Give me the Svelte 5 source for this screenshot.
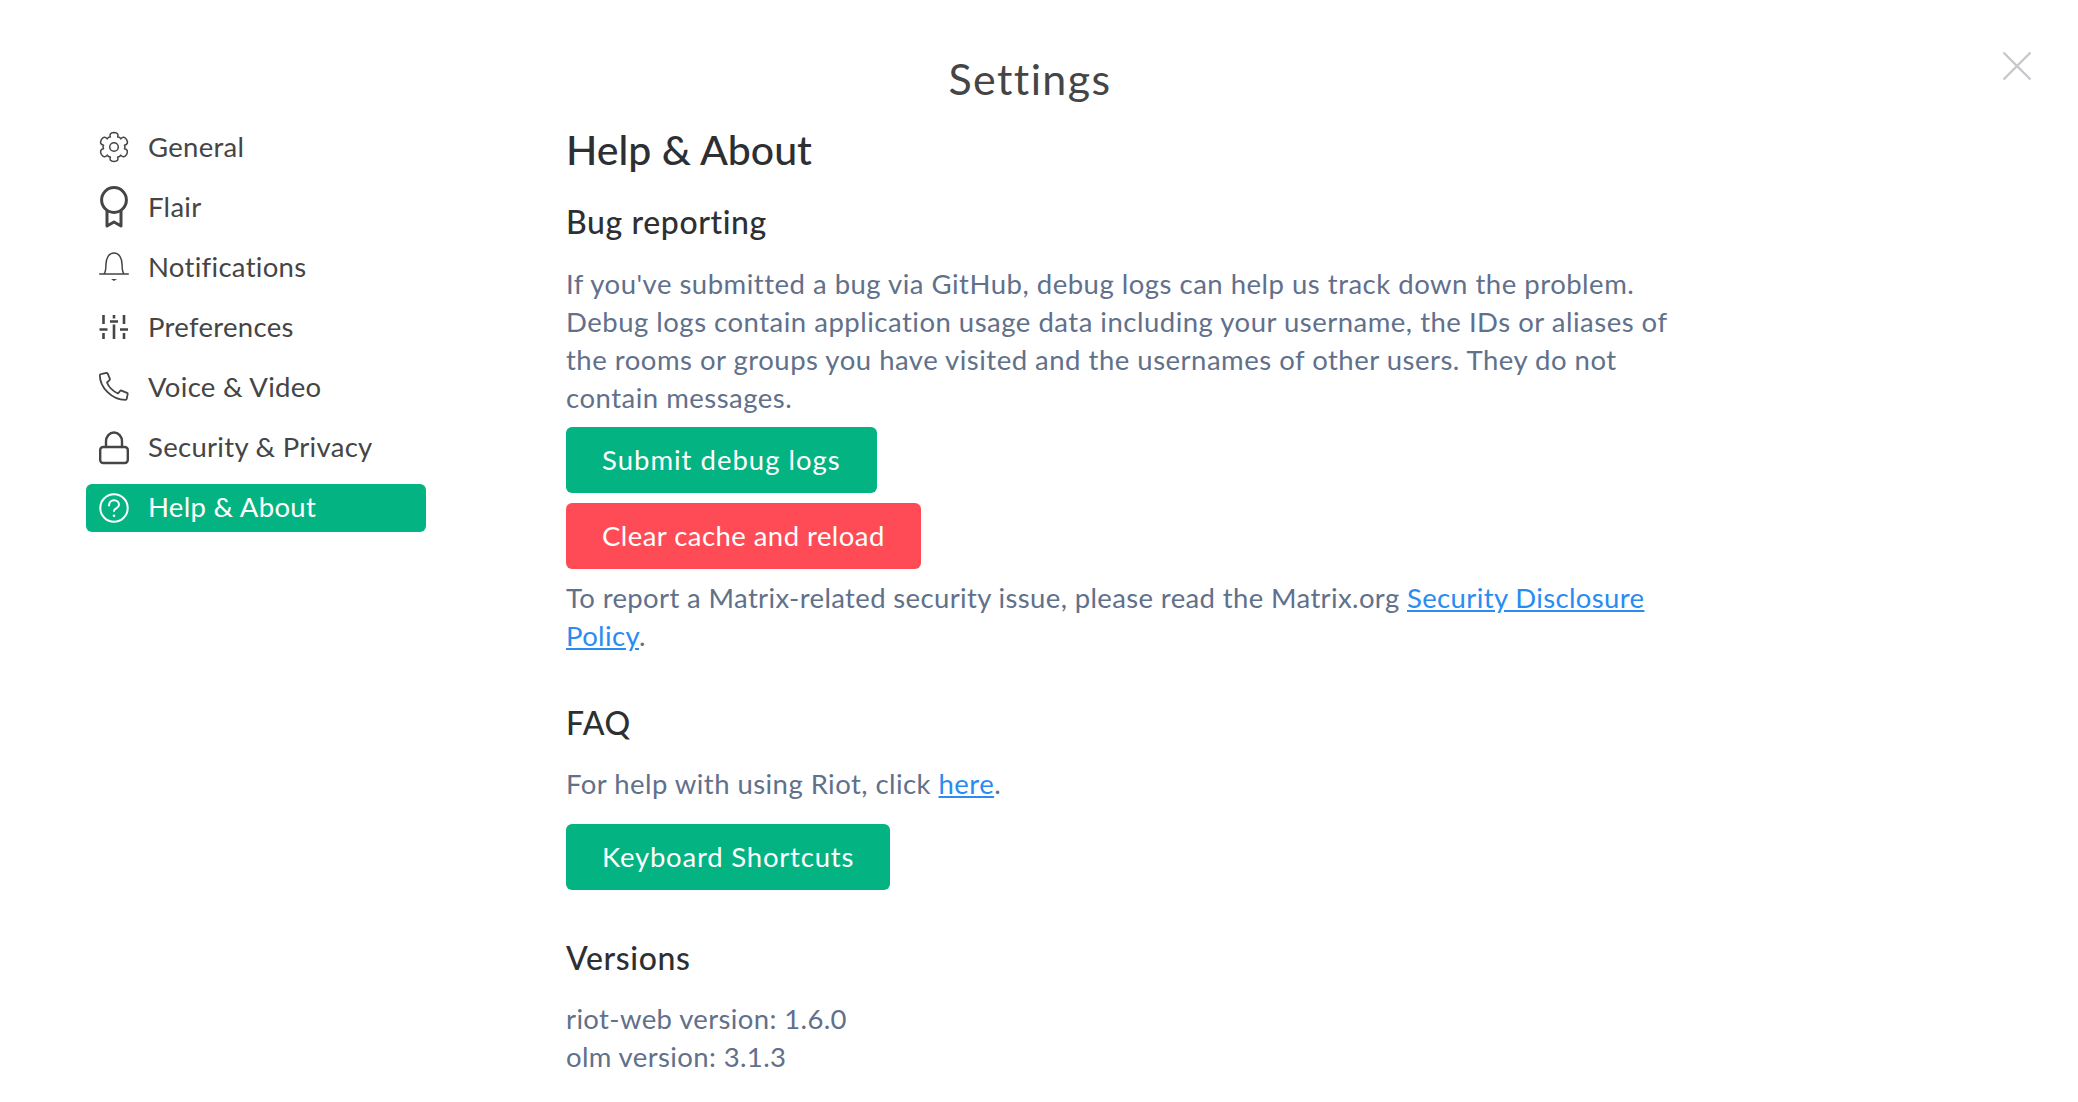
<script>
  const items = ['General','Flair','Notifications','Preferences','Voice & Video','Security & Privacy','Help & About'];
  const pt = (r, deg) => {
    const a = (deg * Math.PI) / 180;
    return `${(15 + r * Math.cos(a)).toFixed(2)} ${(15 + r * Math.sin(a)).toFixed(2)}`;
  };
  let gear = '';
  for (let k = 0; k < 6; k++) {
    const a = k * 60 - 90;
    gear += `${k ? 'Q' + pt(11.6, a - 30) + ' ' : 'M'}${pt(10.6, a - 20)}Q${pt(15.2, a - 20)} ${pt(14.6, a)}Q${pt(15.2, a + 20)} ${pt(10.6, a + 20)}`;
  }
  gear += `Q${pt(11.6, -120)} ${pt(10.6, -110)}Z`;
</script>

<div class="page">
  <header class="top">
    <div class="title">Settings</div>
    <button class="close" aria-label="Close">
      <svg viewBox="0 0 30 30" width="30" height="30"><path d="M1.5 1.5 28.5 28.5M28.5 1.5 1.5 28.5" stroke="#c5c8cc" stroke-width="2.4" fill="none"/></svg>
    </button>
  </header>
  <div class="body">
    <nav class="side">
      {#each items as item, i}
        <div class="item" class:active={i === 6}>
          <svg class="ic" viewBox="0 0 30 30" width="30" height="30" fill="none" stroke="currentColor" stroke-width="1.5" stroke-linejoin="round" stroke-linecap="round">
            {#if i === 0}
              <circle cx="15" cy="15" r="4.3"/>
              <path d={gear}/>
            {:else if i === 1}
              <g stroke-width="3"><circle cx="15" cy="8" r="12.4"/><path d="M8 19V34L15 30 22 34V19"/></g>
            {:else if i === 2}
              <path d="M5 22c1.700-2 1.900-4.500 1.900-9C6.900 6 10 1 15 1s8.100 5 8.100 12c0 4.500.2 7 1.900 9M0.700 22h28.600"/>
              <path d="M12 27h6l-3 2z" fill="currentColor" stroke="none"/>
            {:else if i === 3}
              <path d="M4.500 3v9M4.500 21v6M0.500 17.500h8M15 3v3.500M15 12.500V27M11 9.500h8M25 3v9M25 21v6M21 17.500h8" stroke-width="2.600" stroke-linecap="butt"/>
            {:else if i === 4}
              <path d="M3 1.800 7.500 0.800c.7 0 1 .3 1.200.8l2.200 5.200c.2.500 0 1-.4 1.300L8 10.500c1.800 4.500 6 8.700 11 11l2.200-2.600c.3-.4.800-.5 1.300-.3l5.500 2.300c.5.200.8.700.700 1.200l-1 4.800c-.1.500-.6 1-1.200 1C13 28 .8 15.500.8 3c0-.6.800-1 2.200-1.200z" stroke-width="1.800"/>
            {:else if i === 5}
              <g stroke-width="2.400"><rect x="1.200" y="15" width="27.600" height="16" rx="3"/><path d="M7 15V9.500C7 4.500 10.500 .5 15 .5s8 4 8 9V15"/></g>
            {:else}
              <g stroke-width="2"><circle cx="15" cy="15" r="13.700"/><path d="M10 12.500c0-3.300 2.200-5.300 5-5.300s5 1.900 5 4.500c0 3.800-5 3.500-5 6.300"/></g>
              <circle cx="15" cy="22.800" r="1.300" fill="currentColor" stroke="none"/>
            {/if}
          </svg>
          <span>{item}</span>
        </div>
      {/each}
    </nav>
    <main class="content">
      <h1>Help &amp; About</h1>
      <section class="bug">
        <h2>Bug reporting</h2>
        <p>If you've submitted a bug via GitHub, debug logs can help us track down the problem.<br>Debug logs contain application usage data including your username, the IDs or aliases of<br>the rooms or groups you have visited and the usernames of other users. They do not<br>contain messages.</p>
        <div class="btn green first">Submit debug logs</div>
        <div class="btn red">Clear cache and reload</div>
        <p class="after">To report a Matrix-related security issue, please read the Matrix.org <a href="#s">Security Disclosure</a><br><a href="#s">Policy</a>.</p>
      </section>
      <section class="faq">
        <h2>FAQ</h2>
        <p>For help with using Riot, click <a href="#h">here</a>.</p>
        <div class="btn green kb">Keyboard Shortcuts</div>
      </section>
      <section class="ver">
        <h2>Versions</h2>
        <p>riot-web version: 1.6.0<br>olm version: 3.1.3</p>
      </section>
    </main>
  </div>
</div>

<style>
  :global(body) { margin: 0; background: #fff; }
  .page { width: 2078px; height: 1102px; overflow: hidden; font-family: Lato, "Open Sans", sans-serif; position: relative; }
  .top { height: 125px; box-sizing: border-box; padding-top: 52px; text-align: center; }
  .title { font-size: 43px; line-height: 54px; color: #454545; padding-right: 18px; letter-spacing: 1.4px; }
  .close { position: absolute; right: 46px; top: 51px; width: 30px; height: 30px; padding: 0; border: 0; background: none; }
  .close svg { display: block; }
  .body { display: grid; grid-template-columns: 340px 1fr; column-gap: 140px; padding-left: 86px; }
  .side { display: flex; flex-direction: column; gap: 12px; margin-top: -1px; }
  .item { height: 48px; display: flex; align-items: center; gap: 19px; padding-left: 13px; border-radius: 6px; color: #454545; font-size: 27.500px; letter-spacing: .3px; }
  .item span { margin-top: -4px; }
  .item .ic { margin-top: -3px; }
  .item.active { background: #03b381; color: #fff; }
  .item.active .ic { margin-top: 0; }
  .ic { flex: none; overflow: visible; }
  .content { color: #61708b; font-size: 27.500px; line-height: 38px; letter-spacing: .5px; }
  h1 { margin: 0; font-size: 41px; line-height: 50px; font-weight: 500; color: #2e2f32; letter-spacing: 0; }
  h2 { margin: 0; font-size: 32px; line-height: 40px; font-weight: 500; color: #2e2f32; letter-spacing: .6px; }
  .bug { margin-top: 27px; }
  p { margin: 0; white-space: nowrap; }
  .bug p { margin-top: 23px; }
  .bug p.after { margin-top: 10px; letter-spacing: .37px; }
  .btn { height: 66px; display: flex; align-items: center; justify-content: center; color: #fff; border-radius: 6px; width: fit-content; padding: 0 36px; font-size: 27.500px; }
  .green { background: #03b381; }
  .first { margin-top: 10px; letter-spacing: 1px; }
  .red { background: #ff4b55; margin-top: 10px; letter-spacing: .45px; }
  a { color: #2a8cf0; text-decoration: underline; }
  .faq { margin-top: 48px; }
  .faq p { margin-top: 22px; letter-spacing: .45px; }
  .kb { margin-top: 21px; letter-spacing: .8px; }
  .ver { margin-top: 48px; }
  .ver p { margin-top: 22px; letter-spacing: .38px; }
</style>
